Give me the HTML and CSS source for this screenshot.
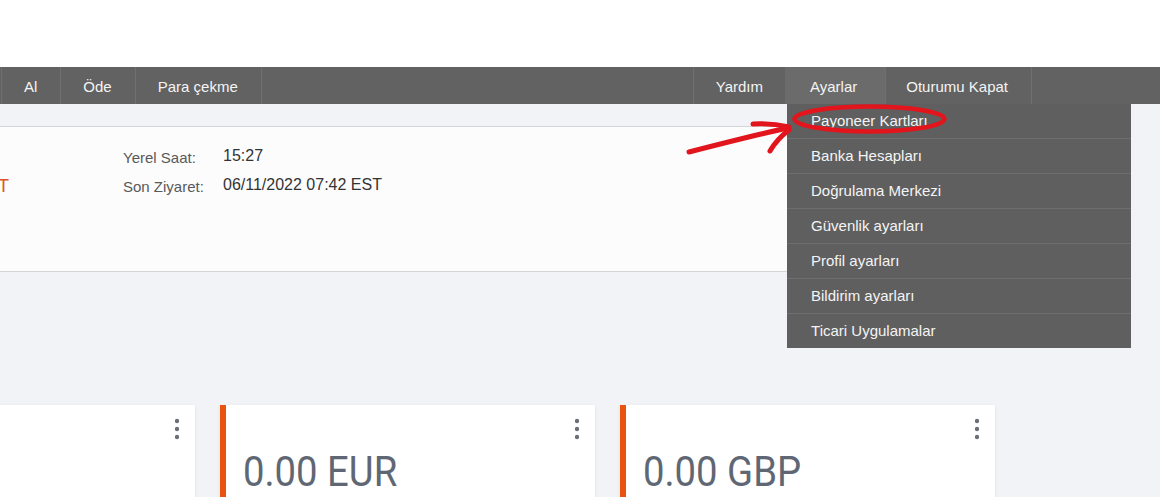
FILE: index.html
```html
<!doctype html>
<html lang="tr">
<head>
    <meta charset="UTF-8">
    <title>Ayarlar</title>
    <link rel="stylesheet" href="styles.css">
</head>
<body>
    <div class="top"></div>
    <div class="nav">
        <ul class="nav-list">
            <li class="nav-group">
                <a class="nav-item first">Al</a>
                <a class="nav-item">Öde</a>
                <a class="nav-item">Para çekme</a>
            </li>
            <li class="nav-group right">
                <a class="nav-item">Yardım</a>
                <div class="nav-item active">Ayarlar
                    <ul class="dropdown">
                        <li>Payoneer Kartları</li>
                        <li>Banka Hesapları</li>
                        <li>Doğrulama Merkezi</li>
                        <li>Güvenlik ayarları</li>
                        <li>Profil ayarları</li>
                        <li>Bildirim ayarları</li>
                        <li>Ticari Uygulamalar</li>
                    </ul>
                </div>
                <a class="nav-item last">Oturumu Kapat</a>
            </li>
        </ul>
    </div>
    <div class="panel">
        <div class="panel-left"><span class="zone">T</span></div>
        <div class="info">
            <div class="label">Yerel Saat:</div>
            <div class="value">15:27</div>
            <div class="label">Son Ziyaret:</div>
            <div class="value">06/11/2022 07:42 EST</div>
        </div>
    </div>
    <div class="cards">
        <div class="card">
            <div class="card-head"><svg class="kebab" width="6" height="24" viewBox="0 0 6 24"><circle cx="3" cy="4" r="2.2"/><circle cx="3" cy="12" r="2.2"/><circle cx="3" cy="20" r="2.2"/></svg></div>
        </div>
        <div class="card accent">
            <div class="card-head"><svg class="kebab" width="6" height="24" viewBox="0 0 6 24"><circle cx="3" cy="4" r="2.2"/><circle cx="3" cy="12" r="2.2"/><circle cx="3" cy="20" r="2.2"/></svg></div>
            <div class="amount"><span>0.00 EUR</span></div>
        </div>
        <div class="card accent">
            <div class="card-head"><svg class="kebab" width="6" height="24" viewBox="0 0 6 24"><circle cx="3" cy="4" r="2.2"/><circle cx="3" cy="12" r="2.2"/><circle cx="3" cy="20" r="2.2"/></svg></div>
            <div class="amount"><span>0.00 GBP</span></div>
        </div>
    </div>
    <!-- elle cizilmis isaret -->
    <svg class="marks" width="1160" height="497" viewBox="0 0 1160 497">
        <g fill="none" stroke="#e2141c" stroke-width="5" stroke-linecap="round" stroke-linejoin="round">
            <path d="M689 152 C720 144 755 135 788 128"/>
            <path d="M753 124 Q772 123 789 127"/>
            <path d="M770 151 Q777 139 789 130"/>
            <ellipse cx="869.5" cy="119" rx="75" ry="12.5" stroke-width="4.5"/>
        </g>
    </svg>
</body>
</html>
```

FILE: styles.css
```css
*{
    margin: 0;
    padding: 0;
    box-sizing: border-box;
}
li{
    list-style: none;
}
body{
    width: 1160px;
    height: 497px;
    overflow: hidden;
    position: relative;
    background: #f2f3f6;
    font-family: "Liberation Sans", Arial, sans-serif;
}
.top{
    height: 67px;
    background: #fff;
}
.nav{
    height: 37px;
    background: #626262;
}
.nav-list{
    display: flex;
    width: 1032px;
    height: 37px;
    padding-left: 1px;
}
.nav-group{
    display: flex;
}
.nav-group.right{
    margin-left: auto;
}
.nav-item{
    display: block;
    position: relative;
    height: 37px;
    padding: 2px 23px 0 22px;
    line-height: 35px;
    font-size: 15px;
    color: #f4f4f4;
    border-right: 1px solid #6f6f6f;
}
.nav-item.first{
    border-left: 1px solid #6f6f6f;
}
.right .nav-item{
    border-right: none;
    border-left: 1px solid #6f6f6f;
    padding: 2px 22px 0 22px;
}
.right .nav-item.last{
    border-right: 1px solid #6f6f6f;
    padding: 2px 23px 0 20px;
}
.right .nav-item.active{
    background: #6b6b6b;
    border-left-color: #6b6b6b;
    padding: 2px 28px 0 24px;
}
.dropdown{
    position: absolute;
    left: 1px;
    top: 37px;
    width: 344px;
    background: #5f5f5f;
    z-index: 5;
}
.dropdown li{
    height: 35px;
    padding-left: 24px;
    line-height: 34px;
    font-size: 15px;
    color: #f4f4f4;
    border-top: 1px solid #6e6e6e;
}
.dropdown li:first-child{
    height: 34px;
    border-top: none;
}
.panel{
    display: flex;
    width: 1120px;
    height: 146px;
    margin-top: 22px;
    padding-top: 16px;
    background: #fcfcfd;
    border-top: 1px solid #d4d5d9;
    border-bottom: 1px solid #d4d5d9;
}
.panel-left{
    width: 123px;
    padding-top: 29px;
    line-height: 29px;
}
.zone{
    margin-left: -2px;
    font-size: 18px;
    color: #dc5523;
}
.info{
    display: grid;
    grid-template-columns: 100px auto;
    grid-auto-rows: 29px;
    align-items: start;
}
.label{
    font-size: 15px;
    line-height: 29px;
    color: #595959;
}
.value{
    font-size: 16px;
    line-height: 25px;
    color: #333;
}
.cards{
    display: flex;
    gap: 25px;
    margin-top: 133px;
    margin-left: -180px;
}
.card{
    width: 375px;
    height: 160px;
    flex-shrink: 0;
    padding: 12px 15px 0 22px;
    background: #fff;
    box-shadow: 0 1px 4px rgba(0,0,0,.07);
}
.card.accent{
    border-left: 6px solid #e8540f;
    padding-left: 17px;
}
.card-head{
    display: flex;
    justify-content: flex-end;
    height: 24px;
}
.kebab{
    fill: #6b7079;
}
.amount{
    margin-top: 9px;
    height: 43px;
    font-family: Roboto, "Liberation Sans", sans-serif;
    font-size: 43px;
    line-height: 43px;
    color: #606774;
}
.amount span{
    display: inline-block;
    transform: scaleX(0.89);
    transform-origin: left;
}
.marks{
    position: absolute;
    left: 0;
    top: 0;
    pointer-events: none;
    z-index: 10;
}
```
